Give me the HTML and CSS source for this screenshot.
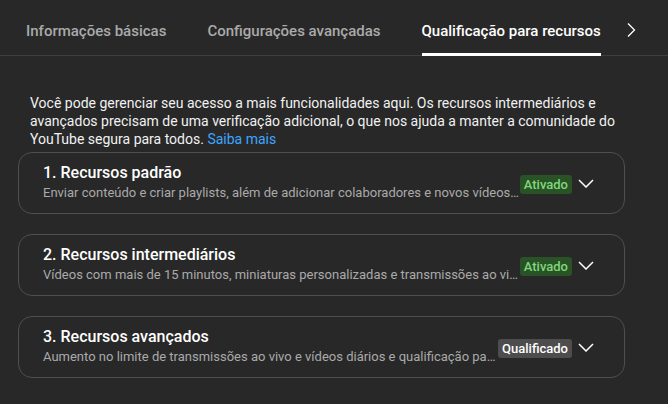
FILE: index.html
```html
<!DOCTYPE html>
<html lang="pt-BR">
<head>
  <meta charset="UTF-8">
  <title>Qualificação para recursos</title>
  <link rel="stylesheet" href="styles.css">
</head>
<body>
  <!-- Abas -->
  <nav class="tabs">
    <span class="tab">Informações básicas</span>
    <span class="tab">Configurações avançadas</span>
    <span class="tab active">Qualificação para recursos</span>
    <span class="tab-next">
      <svg width="10" height="16" viewBox="0 0 10 16"><path d="M2 1.5 L8.5 8 L2 14.5" fill="none" stroke="#fff" stroke-width="1.3"/></svg>
    </span>
  </nav>

  <main class="content">
    <p class="intro">Você pode gerenciar seu acesso a mais funcionalidades aqui. Os recursos intermediários e avançados precisam de uma verificação adicional, o que nos ajuda a manter a comunidade do YouTube segura para todos. <a href="#">Saiba mais</a></p>

    <div class="card">
      <div class="card-text">
        <div class="card-title">1. Recursos padrão</div>
        <div class="card-desc">Enviar conteúdo e criar playlists, além de adicionar colaboradores e novos vídeos a playlists</div>
      </div>
      <span class="badge on">Ativado</span>
      <svg class="chev" width="16" height="9" viewBox="0 0 16 9"><path d="M1 1 L8 8 L15 1" fill="none" stroke="#fff" stroke-width="1.5"/></svg>
    </div>

    <div class="card">
      <div class="card-text">
        <div class="card-title">2. Recursos intermediários</div>
        <div class="card-desc">Vídeos com mais de 15 minutos, miniaturas personalizadas e transmissões ao vivo</div>
      </div>
      <span class="badge on">Ativado</span>
      <svg class="chev" width="16" height="9" viewBox="0 0 16 9"><path d="M1 1 L8 8 L15 1" fill="none" stroke="#fff" stroke-width="1.5"/></svg>
    </div>

    <div class="card">
      <div class="card-text">
        <div class="card-title">3. Recursos avançados</div>
        <div class="card-desc">Aumento no limite de transmissões ao vivo e vídeos diários e qualificação para monetização</div>
      </div>
      <span class="badge">Qualificado</span>
      <svg class="chev" width="16" height="9" viewBox="0 0 16 9"><path d="M1 1 L8 8 L15 1" fill="none" stroke="#fff" stroke-width="1.5"/></svg>
    </div>
  </main>
</body>
</html>
```

FILE: styles.css
```css
body {
  margin: 0;
  background-color: #282828;
  color: #f1f1f1;
  font-family: Roboto, "Noto Sans", Arial, sans-serif;
}
.tabs {
  display: flex;
  align-items: stretch;
  height: 55px;
  padding-left: 26px;
  gap: 41px;
  border-bottom: 1px solid #3e3e3e;
}
.tab {
  display: flex;
  align-items: center;
  font-size: 15px;
  font-weight: 500;
  color: #aaaaaa;
  border-bottom: 3px solid transparent;
  box-sizing: border-box;
  padding-top: 9px;
  margin-bottom: -1px;
}
.tab.active {
  color: #ffffff;
  border-bottom-color: #ffffff;
}
.tab-next {
  display: flex;
  align-items: center;
  margin-left: -16px;
  padding-top: 5px;
}
.content {
  padding: 0 43px 0 18px;
}
.intro {
  margin: 38px 0 4px 12px;
  font-size: 14px;
  line-height: 18px;
  color: #f1f1f1;
}
.intro a {
  color: #3ea6ff;
  text-decoration: none;
}
.card {
  display: flex;
  align-items: center;
  height: 62px;
  box-sizing: border-box;
  border: 1px solid #4f4f4f;
  border-radius: 14px;
  padding: 0 30px 0 24px;
  margin-bottom: 20px;
}
.card-text {
  flex: 1;
  min-width: 0;
}
.card-title {
  font-size: 16px;
  font-weight: 500;
  line-height: 20px;
  color: #ffffff;
}
.card-desc {
  font-size: 13px;
  line-height: 20px;
  color: #aaaaaa;
  white-space: nowrap;
  overflow: hidden;
  text-overflow: ellipsis;
}
.badge {
  flex-shrink: 0;
  font-size: 13px;
  font-weight: 500;
  line-height: 19px;
  padding: 0 4px;
  margin-top: 2px;
  border-radius: 3px;
  background-color: #4d4d4d;
  color: #ffffff;
}
.badge.on {
  background-color: #2a5227;
  color: #7fd77a;
}
.chev {
  flex-shrink: 0;
  margin-left: 6px;
}
```
